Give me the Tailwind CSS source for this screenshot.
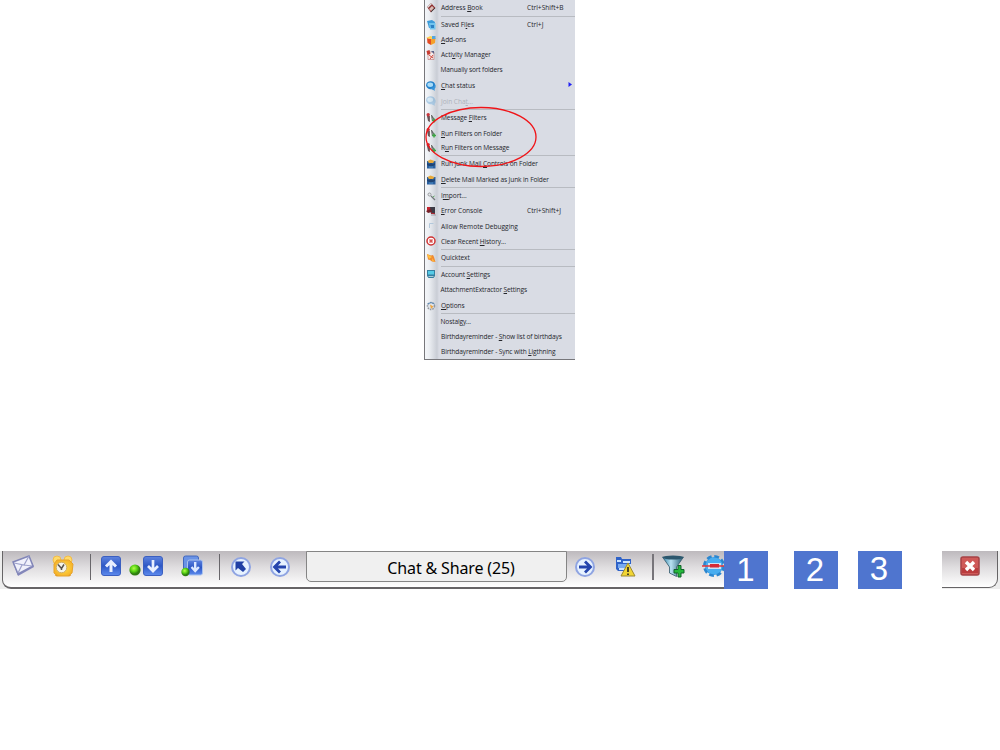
<!DOCTYPE html>
<html lang="en">
<head>
<meta charset="utf-8">
<title>Tools menu</title>
<script src="https://cdn.jsdelivr.net/npm/@tailwindcss/browser@4"></script>
</head>
<body class="bg-white w-[1000px] h-[750px] overflow-hidden font-['Open_Sans',sans-serif]">
<svg width="0" height="0" class="absolute">
  <defs>
    <linearGradient id="blue" x1="0" y1="0" x2="0" y2="1"><stop offset="0" stop-color="#5f84df"/><stop offset=".5" stop-color="#2d57c5"/><stop offset="1" stop-color="#5d8bee"/></linearGradient>
    <linearGradient id="funnel" x1="0" x2="1"><stop offset="0" stop-color="#2f7fa5"/><stop offset=".4" stop-color="#b9e2f2"/><stop offset="1" stop-color="#1d5670"/></linearGradient>
    <radialGradient id="green" cx=".4" cy=".35"><stop offset="0" stop-color="#b4ff4a"/><stop offset=".6" stop-color="#55cf12"/><stop offset="1" stop-color="#2f7d10"/></radialGradient>
    <radialGradient id="gold"><stop offset="0" stop-color="#ffe14a"/><stop offset="1" stop-color="#f7b52a"/></radialGradient>
    <symbol id="filter" viewBox="0 0 10 10"><path d="M1 3h3v6L2 8z" fill="#6a5558"/><circle cx="2.200" cy="1.800" r="1.700" fill="#c8363c"/><path d="M4.500 2v6" stroke="#f4f4f4" stroke-width="1.200"/><path d="M5.500 2l1 6M6 3l3 5" stroke="#666a68" stroke-width="1.100"/><path d="M6 7.500h4M8 5.500v4" stroke="#3da545" stroke-width="1.500"/></symbol>
    <symbol id="junk" viewBox="0 0 10 10"><path d="M1 2h8.500v7.500H1z" fill="#2a5f9e"/><path d="M1 4l2 1 2-1 2 1 2-1v2l-4 2-4-2z" fill="#1f4474"/><path d="M1.500 2l3-1.500L8.500 2 7 4H3z" fill="#e8ab3c"/><path d="M3 8h4" stroke="#4d93d0"/></symbol>
    <symbol id="chat" viewBox="0 0 10 10"><ellipse cx="4.600" cy="4.200" rx="4.500" ry="4" fill="#2481ca"/><ellipse cx="4.200" cy="3.800" rx="2.900" ry="2.200" fill="#a8dcf8"/><path d="M4 7q4 0 5-4 1.500 3-.5 5l.5 1.800L6 8.500z" fill="#3794d9"/></symbol>
  </defs>
</svg>

<div class="flex flex-col">
  <!-- Menu -->
  <nav class="relative ml-[424px] w-[151px] h-[360px] flex flex-col border-l border-b border-[#77777b] bg-[linear-gradient(90deg,#f4f6f9_0,#eceff3_4px,#c9cdd5_12px,#d9dce4_14px)] text-[6.6px] leading-none tracking-[-0.06px] text-[#25262b] whitespace-nowrap [&_u]:underline-offset-1 [&_u]:decoration-[0.5px]">
    <div class="h-4 shrink-0 flex flex-col">
      <div class="flex-1 flex items-center pl-px"><svg class="w-[10px] h-[10px] mr-[5px]" viewBox="0 0 10 10"><path d="M1 4l4-4 4.500 5L5 9.500z" fill="#8d2c2c"/><path d="M1 4l4-4 1 1-4 4z" fill="#ddd"/><path d="M3 6l3-3 2 2-3 3z" fill="#d8bcb5"/><path d="M5 9l4-4" stroke="#444"/></svg><span class="pt-px">Address <u>B</u>ook</span><span class="ml-auto w-[48px] pt-px tracking-normal">Ctrl+Shift+B</span></div>
    </div>
    <div class="h-[93px] shrink-0 flex flex-col relative">
      <i class="absolute left-4 right-0 top-0 h-px bg-[#b8bbc1]"></i>
      <div class="flex-1 flex items-center pl-px pt-px"><svg class="w-[10px] h-[10px] mr-[5px]" viewBox="0 0 10 10"><path d="M1 1l5-1 3 2-1 6H3z" fill="#3c9bd9"/><path d="M3 3h6.500v6.500H4z" fill="#70c4ee"/><path d="M4.500 5H8v3H5z" fill="#2b80c4"/></svg><span class="pt-px">Saved Fi<u>l</u>es</span><span class="ml-auto w-[48px] pt-px tracking-normal">Ctrl+J</span></div>
      <div class="flex-1 flex items-center pl-px"><svg class="w-[10px] h-[10px] mr-[5px]" viewBox="0 0 10 10"><path d="M1 3l4 1v6L1.500 8z" fill="#e34b24"/><path d="M5 4l4.500-1L9 8l-4 2z" fill="#f5a02a"/><path d="M0 3l4.500-2L9 3 5 4z" fill="#ffd34c"/><path d="M6 1h3.500v3H6z" fill="#54a5df"/></svg><span class="pt-px"><u>A</u>dd-ons</span></div>
      <div class="flex-1 flex items-center pl-px"><svg class="w-[10px] h-[10px] mr-[5px]" viewBox="0 0 10 10"><path d="M2 2h6v7.500H2z" fill="#f5eded" stroke="#ba6e6e" stroke-width=".6"/><path d="M.5 1l3-1 1 4-3 1z" fill="#c83c32"/><path d="M5 1h3v3z" fill="#5a6288"/><path d="M3 5l4 3M7 5L4 9" stroke="#d1493e"/></svg><span>Acti<u>v</u>ity Manager</span></div>
      <div class="flex-1 flex items-center pl-[15.5px] tracking-[-0.14px]">Manually sort folders</div>
      <div class="flex-1 flex items-center pl-px"><svg class="w-[10px] h-[10px] mr-[5px]"><use href="#chat"/></svg><span><u>C</u>hat status</span><svg class="ml-auto mr-[3px] mb-[2px] w-[4px] h-[5px]" viewBox="0 0 4 5"><path d="M.5 0L4 2.500.5 5z" fill="#2222f5"/></svg></div>
      <div class="flex-1 flex items-center pl-px text-[#aeb2ba]"><svg class="w-[10px] h-[10px] mr-[5px] opacity-30"><use href="#chat"/></svg><span class="pt-px">Join Cha<u>t</u>...</span></div>
    </div>
    <div class="h-[46px] shrink-0 flex flex-col relative pt-px tracking-[-0.11px]">
      <i class="absolute left-4 right-0 top-0 h-px bg-[#b8bbc1]"></i>
      <div class="flex-1 flex items-center pl-px pt-px"><svg class="w-[10px] h-[10px] mr-[5px]"><use href="#filter"/></svg><span class="pt-px">Message <u>F</u>ilters</span></div>
      <div class="flex-1 flex items-center pl-px pt-px"><svg class="w-[10px] h-[10px] mr-[5px]"><use href="#filter"/></svg><span class="pt-px"><u>R</u>un Filters on Folder</span></div>
      <div class="flex-1 flex items-center pl-px"><svg class="w-[10px] h-[10px] mr-[5px]"><use href="#filter"/></svg><span class="pt-[1.5px]">R<u>u</u>n Filters on Message</span></div>
    </div>
    <div class="h-8 shrink-0 flex flex-col relative pt-px tracking-[-0.11px]">
      <i class="absolute left-4 right-0 top-0 h-px bg-[#b8bbc1]"></i>
      <div class="flex-1 flex items-center pl-px pt-px"><svg class="w-[10px] h-[10px] mr-[5px]"><use href="#junk"/></svg><span class="pt-px">Run Junk Mail <u>C</u>ontrols on Folder</span></div>
      <div class="flex-1 flex items-center pl-px pt-px"><svg class="w-[10px] h-[10px] mr-[5px]"><use href="#junk"/></svg><span class="pt-px"><u>D</u>elete Mail Marked as Junk in Folder</span></div>
    </div>
    <div class="h-[62px] shrink-0 flex flex-col relative pt-px">
      <i class="absolute left-4 right-0 top-0 h-px bg-[#b8bbc1]"></i>
      <div class="flex-1 flex items-center pl-px"><svg class="w-[10px] h-[10px] mr-[5px]" viewBox="0 0 10 10"><circle cx="3.500" cy="3.500" r="1.500" fill="#e8eaec" stroke="#8e9296" stroke-width=".9"/><path d="M5 5l4 4" stroke="#73787b" stroke-width="1.300"/><path d="M7 6l1.500-1" stroke="#58aa5a"/></svg><span class="pt-[1.5px]">I<u>m</u>port...</span></div>
      <div class="flex-1 flex items-center pl-px"><svg class="w-[10px] h-[10px] mr-[5px]" viewBox="0 0 10 10"><path d="M1 1h5v5H1z" fill="#c32630"/><path d="M4 1h5v7H5z" fill="#3b3b45"/><path d="M0 5l5-2 1 3-4 1z" fill="#742128"/><path d="M5 7l4 1" stroke="#c32630"/><path d="M5 9h5" stroke="#9d9ea7"/></svg><span class="pt-[1.5px]"><u>E</u>rror Console</span><span class="ml-auto w-[48px] pt-[1.5px] tracking-normal">Ctrl+Shift+J</span></div>
      <div class="flex-1 flex items-center pl-px tracking-normal"><svg class="w-[10px] h-[10px] mr-[5px]" viewBox="0 0 10 10"><path d="M3.500 7V2.500h4" fill="none" stroke="#b3c8db"/></svg><span class="pt-[1.5px]">Allow Remote Debu<u>g</u>ging</span></div>
      <div class="flex-1 flex items-center pl-px tracking-[-0.12px]"><svg class="w-[10px] h-[10px] mr-[5px]" viewBox="0 0 10 10"><circle cx="5" cy="5" r="4" fill="#fff" stroke="#cf3232" stroke-width="1.500"/><path d="M3.500 3.500l3 3M6.500 3.500l-3 3" stroke="#d8514e" stroke-width="1.500"/></svg><span class="pt-[1.5px]">Clear Recent <u>H</u>istory...</span></div>
    </div>
    <div class="h-[17px] shrink-0 flex flex-col relative">
      <i class="absolute left-4 right-0 top-0 h-px bg-[#b8bbc1]"></i>
      <div class="flex-1 flex items-center pl-px"><svg class="w-[10px] h-[10px] mr-[5px]" viewBox="0 0 10 10"><path d="M1 1l4 1.500L7 2l1 2 1.500 5L6 8.500 4 7 2 6.500z" fill="#f08a32"/><path d="M1 1l5 3-3 2z" fill="#ffc33e"/><path d="M6 5l3 4-3-1z" fill="#ffb338"/></svg><span class="pt-[1.5px]">Quicktext</span></div>
    </div>
    <div class="h-[47px] shrink-0 flex flex-col relative pt-px tracking-[-0.13px]">
      <i class="absolute left-4 right-0 top-0 h-px bg-[#b8bbc1]"></i>
      <div class="flex-1 flex items-center pl-px"><svg class="w-[10px] h-[10px] mr-[5px]" viewBox="0 0 10 10"><path d="M1 1h8v6L7.500 9h-5L1 7z" fill="#367f9f"/><path d="M2 2h6v3.500H2z" fill="#55cbe7"/><path d="M2.500 7.500h5" stroke="#a9cbd7"/></svg><span class="pt-[1.5px]">Account <u>S</u>ettings</span></div>
      <div class="flex-1 flex items-center pl-[15.5px] pt-px"><span class="pt-px">AttachmentExtractor <u>S</u>ettings</span></div>
      <div class="flex-1 flex items-center pl-px pt-px"><svg class="w-[10px] h-[10px] mr-[5px]" viewBox="0 0 10 10"><circle cx="5" cy="5" r="3.500" fill="#e0e5eb" stroke="#92979f" stroke-width="1.500" stroke-dasharray="1.500 1"/><path d="M1.500 3L5 1.500 8.500 3" fill="none" stroke="#5b8bb8"/><path d="M4 3.500l3.500 2L5 8z" fill="#eda541"/></svg><span class="pt-px"><u>O</u>ptions</span></div>
    </div>
    <div class="h-[46px] shrink-0 flex flex-col relative pt-px tracking-[-0.13px]">
      <i class="absolute left-4 right-0 top-0 h-px bg-[#b8bbc1]"></i>
      <div class="flex-1 flex items-center pl-[15.5px]"><span class="pt-[1.5px]">Nostalgy...</span></div>
      <div class="flex-1 flex items-center pl-4"><span class="pt-[1.5px]">Birthdayreminder - <u>S</u>how list of birthdays</span></div>
      <div class="flex-1 flex items-center pl-4"><span class="pt-[1.5px]">Birthdayreminder - Sync with <u>L</u>igthning</span></div>
    </div>
    <svg class="absolute left-0 top-[106px] w-[114px] h-[62px]" viewBox="0 0 114 62"><ellipse cx="56" cy="31" rx="55" ry="29.500" fill="none" stroke="#f01418" stroke-width="1.300"/></svg>
  </nav>

  <!-- Toolbar -->
  <div class="mt-[191px] flex h-[38px] w-[1000px]">
    <div class="w-[724px] shrink-0 overflow-hidden bg-[#ededed]">
      <div class="ml-[2px] w-[760px] h-[38px] flex items-start rounded-bl-[9px] border-l border-b-2 border-[#666466] bg-linear-to-b from-[#bdb9bd] via-[#dfdddf] via-45% to-white">
        <div class="w-[41px] h-[30px] flex justify-center items-center shrink-0"><svg width="26" height="26" viewBox="0 0 26 26"><path d="M2 10L18 3l5 11-16 9z" fill="#8587bc"/><path d="M2 9L18 3l4 10-15 8z" fill="#f0f1fb" stroke="#8286b8" stroke-width="1.500"/><path d="M3 10l10 2 5-9M7 20l4-8M21 13l-8-1" fill="none" stroke="#9da1cb" stroke-width="1.200"/></svg></div>
        <div class="w-[38px] h-[30px] flex justify-center items-center shrink-0"><svg width="24" height="26" viewBox="0 0 24 26"><circle cx="6" cy="7" r="4" fill="#ffdb6a" stroke="#f2bb4a"/><circle cx="17" cy="7" r="4" fill="#ffdb6a" stroke="#f2bb4a"/><path d="M7 20l-2 3M17 20l2 3" stroke="#e09a25" stroke-width="3"/><path d="M6 7h12l4 4-1 9-4 3H7l-4-3V11z" fill="url(#gold)" stroke="#e7a32c"/><circle cx="10.500" cy="14.500" r="5.300" fill="#f5f3e8" stroke="#cfab62"/><path d="M7 11.500l3.500 4 2.500-4M10.500 15v2" fill="none" stroke="#59534a" stroke-width="1.500"/></svg></div>
        <div class="w-4 h-8 flex justify-center shrink-0"><i class="mt-[3px] w-px h-[26px] bg-[#68666a]"></i></div>
        <div class="ml-px w-6 h-[30px] flex justify-center items-center shrink-0"><svg width="20" height="20" viewBox="0 0 20 20"><rect x=".5" y=".5" width="19" height="19" rx="2.500" fill="url(#blue)" stroke="#3b5fc0"/><path d="M10 16V6M5 10.500l5-5 5 5" fill="none" stroke="#e8efff" stroke-width="3"/></svg></div>
        <div class="w-[46px] h-[30px] flex justify-center items-center shrink-0"><svg width="36" height="24" viewBox="0 0 36 24"><circle cx="7" cy="16" r="5.600" fill="url(#green)"/><rect x="15.500" y="2.500" width="19" height="19" rx="2.500" fill="url(#blue)" stroke="#3b5fc0"/><path d="M25 6v10M20 12l5 5 5-5" fill="none" stroke="#e8efff" stroke-width="2.700"/></svg></div>
        <div class="w-[46px] h-[30px] flex justify-center items-center shrink-0"><svg width="24" height="24" viewBox="0 0 24 24"><rect x="3.500" y="2" width="15" height="15" rx="2" fill="#6a93e6" stroke="#4268be"/><rect x="7.500" y="6" width="15" height="15" rx="2" fill="url(#blue)" stroke="#a9c2ed"/><path d="M15.200 8v8M11.500 13l3.700 4 3.700-4" fill="none" stroke="#dce8ff" stroke-width="2.400"/><circle cx="5.500" cy="18" r="4.200" fill="url(#green)"/></svg></div>
        <div class="w-2 h-8 flex justify-center shrink-0"><i class="mt-[3px] w-px h-[26px] bg-[#68666a]"></i></div>
        <div class="w-9 h-[31px] flex justify-center items-center shrink-0"><svg width="22" height="22" viewBox="0 0 22 22"><circle cx="11" cy="11" r="9" fill="#e7f2ff" stroke="#8fa4e2" stroke-width="2"/><path d="M5.500 5.500h9L12 8l4 5-3 3-5-4-2.500 2.500z" fill="#2140a5"/></svg></div>
        <div class="w-[42px] h-[31px] flex justify-center items-center shrink-0"><svg width="22" height="22" viewBox="0 0 22 22"><circle cx="11" cy="11" r="9" fill="#e7f2ff" stroke="#8fa4e2" stroke-width="2"/><path d="M17 11H7M11 5.500L5.500 11l5.500 5.500" fill="none" stroke="#2545ad" stroke-width="2.800"/></svg></div>
        <div class="ml-[5px] w-[261px] h-[31px] shrink-0 rounded-b-[5px] border border-[#858585] bg-[#f0f0f0] flex items-center justify-center pl-[29px] pt-[3px] text-[16px] leading-none text-black font-['Noto_Sans',sans-serif] tracking-[-0.15px]"><span>Chat &amp; Share (25)</span></div>
        <div class="w-9 h-[31px] flex justify-center items-center shrink-0"><svg width="22" height="22" viewBox="0 0 22 22"><circle cx="11" cy="11" r="9" fill="#e7f2ff" stroke="#8fa4e2" stroke-width="2"/><path d="M5 11h10M11 5.500l5.500 5.500-5.500 5.500" fill="none" stroke="#2545ad" stroke-width="2.800"/></svg></div>
        <div class="w-11 h-8 flex justify-center items-center shrink-0"><svg width="22" height="22" viewBox="0 0 22 22"><path d="M2 1h5l1 2h9v12H4l-2-2z" fill="#2f62c8"/><path d="M3 4h4v2H3zM9 5h7v2H9zM5 8h12v6H5z" fill="#cae4ff"/><path d="M4 8h9v4H4z" fill="#78aaf0"/><path d="M14 7l7 13H7z" fill="#f2d533" stroke="#9b8930"/><path d="M14 11v5M14 17.500v1.500" stroke="#3c3720" stroke-width="1.800"/></svg></div>
        <div class="w-3 h-8 flex justify-center shrink-0"><i class="mt-[3px] w-[2px] h-[26px] bg-[#77757a]"></i></div>
        <div class="w-7 h-[30px] flex justify-center items-center shrink-0"><svg width="24" height="24" viewBox="0 0 24 24"><path d="M1.500 3h21l-7 10v9.500l-7-3.500v-6z" fill="url(#funnel)" stroke="#34586a" stroke-width=".8"/><ellipse cx="12" cy="3.500" rx="10" ry="2" fill="#2c576d"/><path d="M13 15.500h4v-4h3v4h3v3.500h-3v4h-3v-4h-4z" fill="#25b83b" stroke="#10632b"/></svg></div>
        <div class="w-[52px] h-[30px] flex justify-center items-center shrink-0"><svg width="24" height="24" viewBox="0 0 24 24"><circle cx="13" cy="12" r="9" fill="#3aa0e7" stroke="#2b86cf" stroke-width="4" stroke-dasharray="4.500 2.570"/><circle cx="13" cy="12" r="8.500" fill="#48adf0"/><path d="M7 9h13v6H7z" fill="#cfe3f4"/><path d="M1 12h22" stroke="#e33537" stroke-width="1.500"/><path d="M9 10h9v3.500H9z" fill="#d52b36"/></svg></div>
      </div>
    </div>
    <div class="w-[44px] shrink-0 bg-[#4f75cf] text-white font-['Liberation_Sans',sans-serif] text-[33px] leading-[38px] text-center pr-px">1</div>
    <div class="ml-[26px] w-[44px] shrink-0 bg-[#4f75cf] text-white font-['Liberation_Sans',sans-serif] text-[33px] leading-[38px] text-center pr-[2px]">2</div>
    <div class="ml-[20px] w-[44px] shrink-0 bg-[#4f75cf] text-white font-['Liberation_Sans',sans-serif] text-[33px] leading-[36px] text-center pr-[2px]">3</div>
    <div class="ml-[40px] w-[58px] shrink-0 bg-[#ededed]">
      <div class="w-[56px] h-[37px] rounded-br-[9px] border-r border-b border-[#666466] bg-linear-to-b from-[#bdb9bd] via-[#dfdddf] via-45% to-white flex items-start pl-[18px] pt-[5px]"><svg width="20" height="20" viewBox="0 0 20 20"><rect x="1" y="1" width="18" height="18" rx="2" fill="#cf5a59" stroke="#a64245" stroke-width="1.500"/><path d="M2 12h16v5H2z" fill="#bb3c3e"/><path d="M6 6l8 8M14 6l-8 8" stroke="#fff" stroke-width="3.400"/></svg></div>
    </div>
  </div>
</div>
</body>
</html>
